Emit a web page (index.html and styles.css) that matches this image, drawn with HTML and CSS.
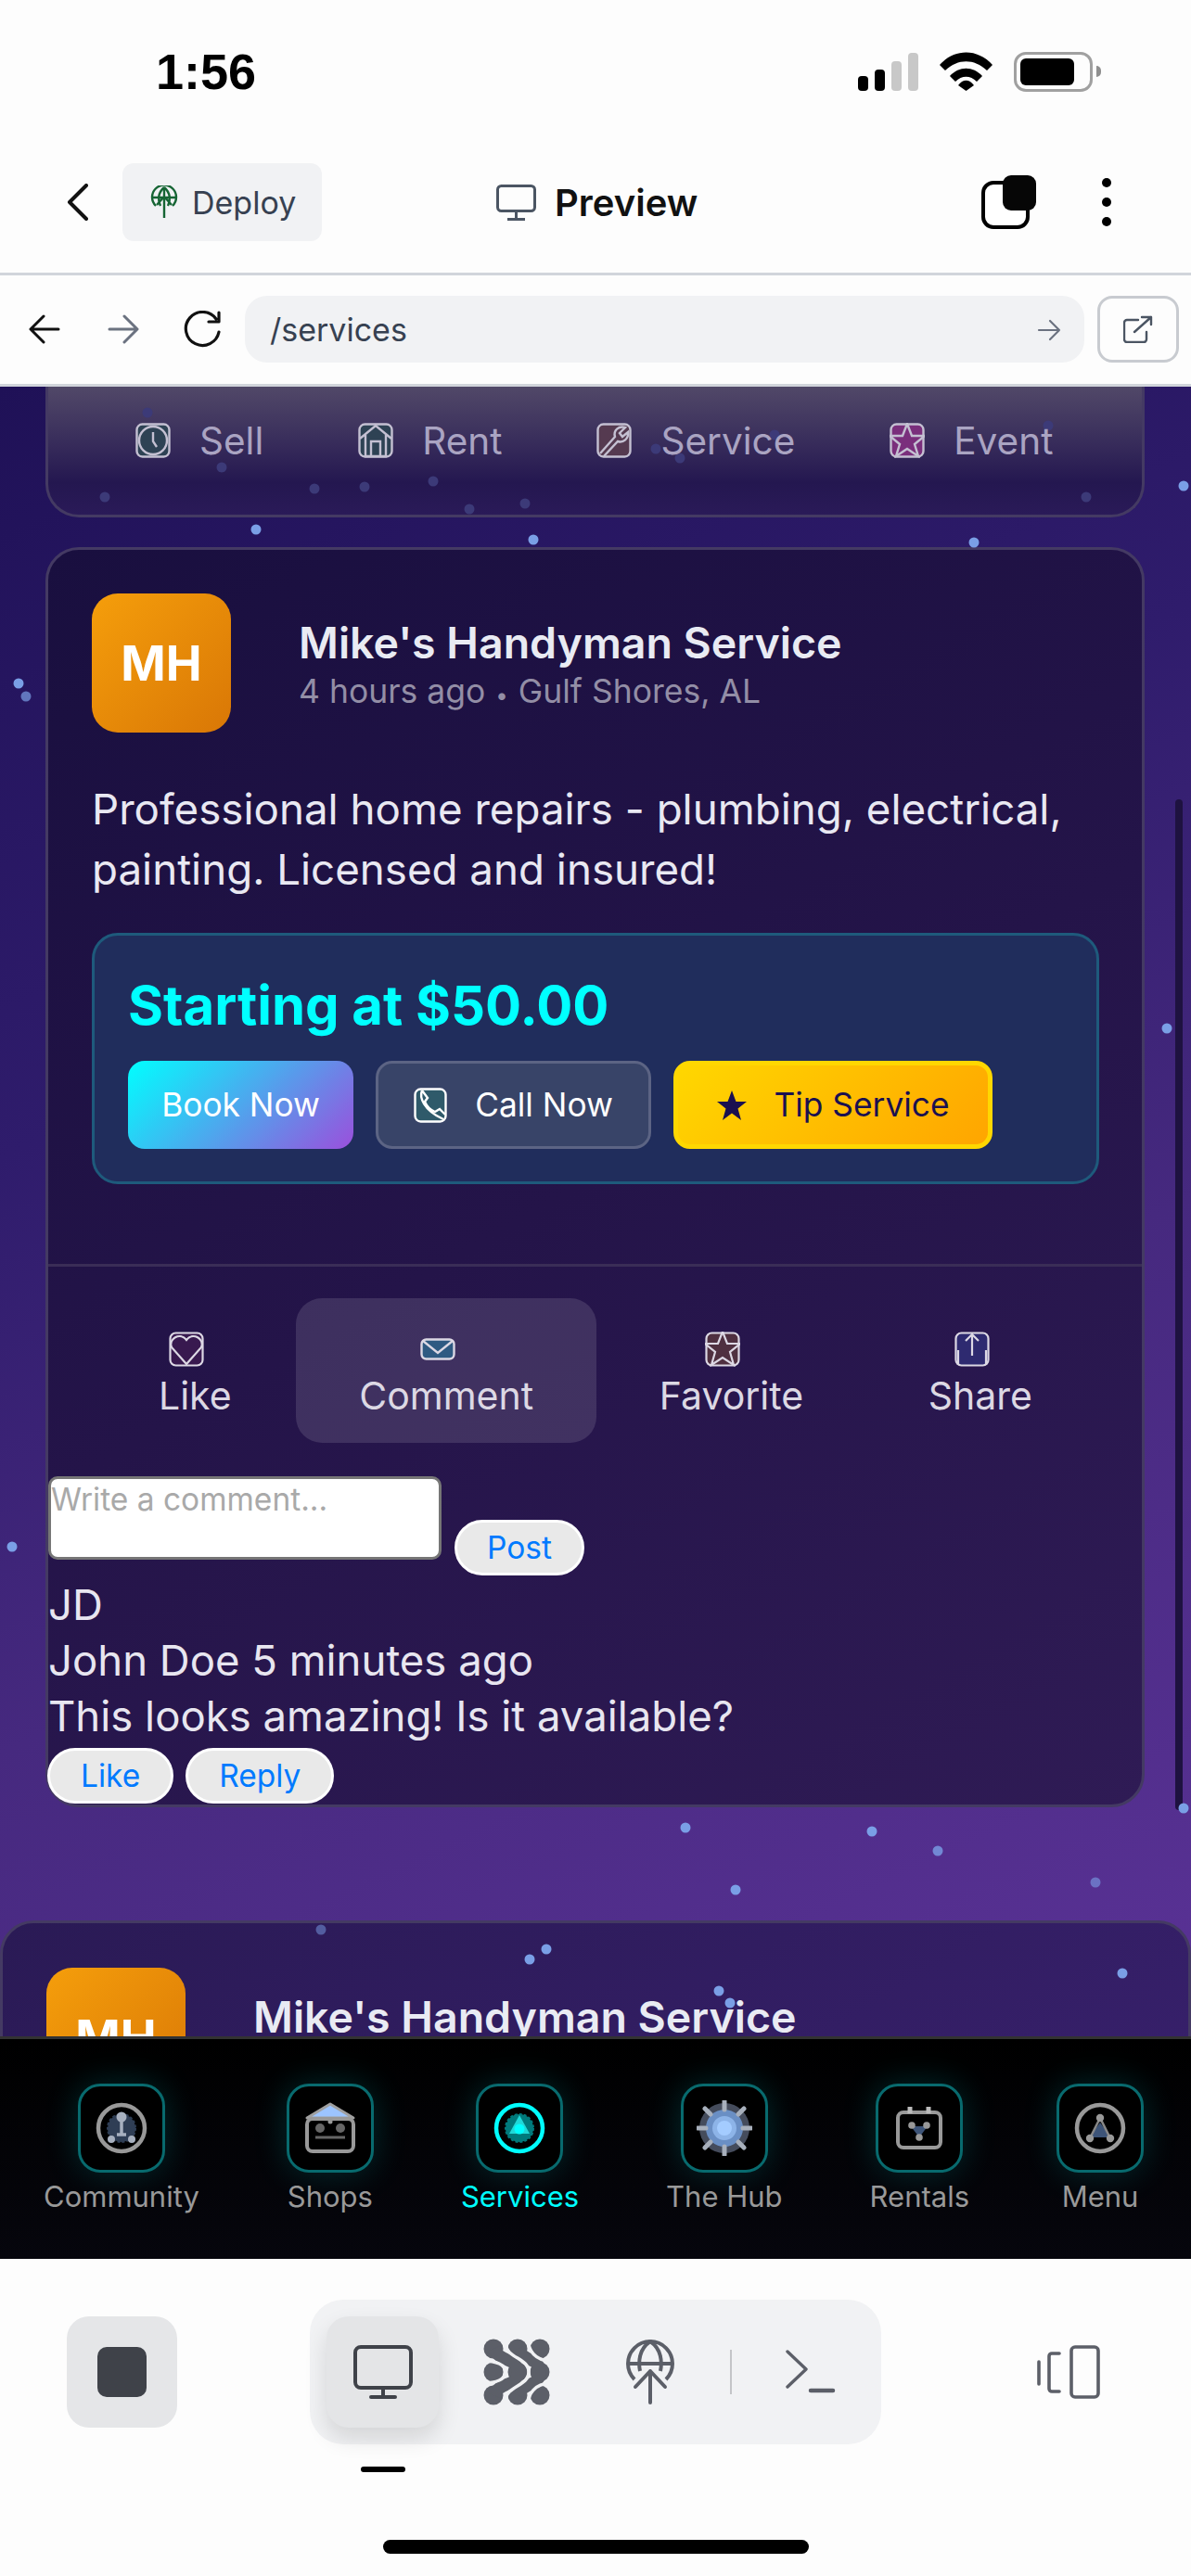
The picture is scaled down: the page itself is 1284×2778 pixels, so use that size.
FILE: index.html
```html
<!DOCTYPE html>
<html lang="en">

<head>
    <meta charset="UTF-8">
    <meta name="viewport" content="width=device-width, initial-scale=1.0">
    <title>Services Preview</title>
    <link rel="stylesheet" href="styles.css">
</head>

<body>

    <div class="status">
        <span class="time">1:56</span>
        <div class="status-icons">
            <svg width="66" height="41" viewBox="0 0 66 41">
                <rect x="0" y="25" width="11" height="16" rx="4" fill="#000" />
                <rect x="18" y="18" width="11" height="23" rx="4" fill="#000" />
                <rect x="36" y="9" width="11" height="32" rx="4" fill="#c8c8c8" />
                <rect x="54" y="0" width="11" height="41" rx="4" fill="#c8c8c8" />
            </svg>
            <svg class="wifi" width="57" height="42" viewBox="0 0 57 42">
                <path d="M0 14C16 -4 41 -4 57 14L51 20C37 7 20 7 6 20Z" fill="#000" />
                <path d="M11 26C21 15 36 15 46 26L40 32C33 25 24 25 17 32Z" fill="#000" />
                <path d="M20 36C25 29 32 29 37 36L28.5 42Z" fill="#000" />
            </svg>
            <div class="battery"><div class="battery-fill"></div></div>
            <div class="battery-nub"></div>
        </div>
    </div>

    <div class="topbar">
        <svg class="back" width="23" height="40" viewBox="0 0 23 40">
            <path d="M21 2L3 20L21 38" fill="none" stroke="#111" stroke-width="4" stroke-linecap="round" stroke-linejoin="round" />
        </svg>
        <div class="deploy">
            <svg width="30" height="36" viewBox="0 0 30 36" fill="none" stroke="#166534" stroke-width="2.4">
                <path d="M6 22A13 13 0 1 1 24 22" />
                <path d="M15 2C8 8 8 16 11 22M15 2C22 8 22 16 19 22M2 13H28M15 2V35M7 21L15 12L23 21" />
            </svg>
            <span>Deploy</span>
        </div>
        <div class="preview">
            <svg width="43" height="39" viewBox="0 0 43 39" fill="none" stroke="#4b5563" stroke-width="3">
                <rect x="1.5" y="1.5" width="40" height="27" rx="4" />
                <path d="M21.5 29V37M12 37.5H31" />
            </svg>
            <span>Preview</span>
        </div>
        <svg class="tabs-icon" width="59" height="58" viewBox="0 0 59 58">
            <rect x="2" y="8" width="48" height="48" rx="11" fill="#fff" stroke="#000" stroke-width="4" />
            <rect x="23" y="0" width="36" height="38" rx="9" fill="#060606" />
        </svg>
        <svg class="dots" width="12" height="54" viewBox="0 0 12 54">
            <circle cx="6" cy="6" r="5" fill="#000" />
            <circle cx="6" cy="27" r="5" fill="#000" />
            <circle cx="6" cy="48" r="5" fill="#000" />
        </svg>
    </div>

    <div class="urlbar">
        <svg class="nav-arrow" width="34" height="32" viewBox="0 0 34 32" fill="none" stroke="#111" stroke-width="3" stroke-linecap="round" stroke-linejoin="round">
            <path d="M32 16H3M16 2L2 16L16 30" />
        </svg>
        <svg class="nav-arrow forward" width="34" height="32" viewBox="0 0 34 32" fill="none" stroke="#6b7280" stroke-width="3" stroke-linecap="round" stroke-linejoin="round">
            <path d="M2 16H31M18 2L32 16L18 30" />
        </svg>
        <svg class="reload" width="46" height="40" viewBox="0 0 46 40" fill="none" stroke="#111" stroke-width="3.2" stroke-linecap="round" stroke-linejoin="round">
            <path d="M38 9A18 18 0 1 0 41 23M41 2V12H30" />
        </svg>
        <div class="address">
            <span>/services</span>
            <svg width="26" height="24" viewBox="0 0 26 24" fill="none" stroke="#6b7280" stroke-width="2.2" stroke-linecap="round" stroke-linejoin="round">
                <path d="M2 12H24M14 2L24 12L14 22" />
            </svg>
        </div>
        <div class="external">
            <svg width="32" height="30" viewBox="0 0 32 30" fill="none" stroke="#4b5563" stroke-width="2.4" stroke-linecap="round" stroke-linejoin="round">
                <path d="M16 5H4A3 3 0 0 0 1 8V26A3 3 0 0 0 4 29H22A3 3 0 0 0 25 26V18M12 18L30 2M20 2H30V10" />
            </svg>
        </div>
    </div>

    <div class="content">
        <svg class="particles dim" width="1284" height="1779" viewBox="0 417 1284 1779">
            <circle cx="159" cy="445" r="5.5" /><circle cx="239" cy="504" r="5.5" />
            <circle cx="339" cy="527" r="5.5" /><circle cx="393" cy="525" r="5.5" />
            <circle cx="467" cy="519" r="5.5" /><circle cx="113" cy="536" r="5.5" />
            <circle cx="566" cy="543" r="5.5" /><circle cx="506" cy="549" r="5.5" />
            <circle cx="707" cy="484" r="5.5" /><circle cx="733" cy="494" r="5.5" />
            <circle cx="835" cy="469" r="5.5" /><circle cx="1130" cy="459" r="5.5" />
            <circle cx="1171" cy="536" r="5.5" />
        </svg>

        <div class="card card-top">
            <div class="post-type">
                <svg width="38" height="38" viewBox="0 0 38 38" fill="none" stroke="#c4c0d2" stroke-width="2.4">
                    <rect x="1.5" y="1.5" width="35" height="35" rx="6" fill="#2e4254" />
                    <circle cx="19" cy="19" r="15" />
                    <path d="M19 10V20L23 26" />
                </svg>
                <span>Sell</span>
            </div>
            <div class="post-type">
                <svg width="38" height="38" viewBox="0 0 38 38" fill="none" stroke="#c4c0d2" stroke-width="2.4">
                    <rect x="1.5" y="1.5" width="35" height="35" rx="6" fill="#2e4254" />
                    <path d="M2 17L19 3L36 17M8 13V36H30V13M14 36V20H24V36" />
                </svg>
                <span>Rent</span>
            </div>
            <div class="post-type">
                <svg width="38" height="38" viewBox="0 0 38 38" fill="none" stroke="#c4c0d2" stroke-width="2.4">
                    <rect x="1.5" y="1.5" width="35" height="35" rx="6" fill="#553a50" />
                    <path d="M4 33L20 15C18 8 24 3 31 5L25 11L28 15L34 10C35 17 29 22 23 20L8 36" />
                </svg>
                <span>Service</span>
            </div>
            <div class="post-type">
                <svg width="38" height="38" viewBox="0 0 38 38" fill="none" stroke="#c4c0d2" stroke-width="2.4">
                    <rect x="1.5" y="1.5" width="35" height="35" rx="6" fill="#7a2f7c" />
                    <path d="M19 1L24 14L38 14L27 23L31 36L19 28L7 36L11 23L0 14L14 14Z" fill="#7a2f7c" />
                </svg>
                <span>Event</span>
            </div>
        </div>

        <div class="card card-post">
            <div class="post-header">
                <div class="avatar">MH</div>
                <div class="post-info">
                    <div class="post-title">Mike's Handyman Service</div>
                    <div class="post-meta">4 hours ago <span class="meta-dot">•</span> Gulf Shores, AL</div>
                </div>
            </div>
            <p class="post-text">Professional home repairs - plumbing, electrical, painting. Licensed and insured!</p>
            <div class="price-box">
                <div class="price">Starting at $50.00</div>
                <div class="price-buttons">
                    <button class="btn-book">Book Now</button>
                    <button class="btn-call">
                        <svg width="36" height="38" viewBox="0 0 36 38" fill="none" stroke="#fff" stroke-width="2.4">
                            <rect x="1.5" y="1.5" width="33" height="35" rx="6" fill="#2f5a6a" />
                            <path d="M9 3C6 10 10 24 32 34M9 3L15 11L12 15C14 20 18 24 23 26L28 23L34 29" />
                        </svg>
                        Call Now
                    </button>
                    <button class="btn-tip">
                        <svg width="34" height="34" viewBox="0 0 34 34">
                            <path d="M17 1L21.5 13H33L23.5 20.5L27 33L17 25.5L7 33L10.5 20.5L1 13H12.5Z" fill="#1a1050" />
                        </svg>
                        Tip Service
                    </button>
                </div>
            </div>
            <div class="post-actions">
                <div class="action">
                    <svg width="38" height="38" viewBox="0 0 38 38" fill="none" stroke="#dcd8e4" stroke-width="2.2">
                        <rect x="1.5" y="1.5" width="35" height="35" rx="6" fill="#38194f" />
                        <path d="M19 35L3 17C-1 8 12 0 19 9C26 0 39 8 35 17Z" fill="#38194f" />
                    </svg>
                    <span>Like</span>
                </div>
                <div class="action active">
                    <svg class="mail" width="38" height="24" viewBox="0 0 38 24" fill="none" stroke="#dcd8e4" stroke-width="2.4">
                        <rect x="1.5" y="1.5" width="35" height="21" rx="5" fill="#2f5a82" />
                        <path d="M3 3L19 16L35 3" />
                    </svg>
                    <span>Comment</span>
                </div>
                <div class="action">
                    <svg width="38" height="38" viewBox="0 0 38 38" fill="none" stroke="#dcd8e4" stroke-width="2.2">
                        <rect x="1.5" y="1.5" width="35" height="35" rx="6" fill="#4f3040" />
                        <path d="M19 0L24 13L38 13L27 22L31 36L19 28L7 36L11 22L0 13L14 13Z" fill="#4f3040" />
                    </svg>
                    <span>Favorite</span>
                </div>
                <div class="action">
                    <svg width="38" height="38" viewBox="0 0 38 38" fill="none" stroke="#dcd8e4" stroke-width="2.2">
                        <rect x="1.5" y="1.5" width="35" height="35" rx="6" fill="#2e2a70" />
                        <path d="M19 26V4M12 10L19 3L26 10M4 20V36M34 20V36" />
                    </svg>
                    <span>Share</span>
                </div>
            </div>
            <div class="comment-form">
                <textarea placeholder="Write a comment..."></textarea>
                <button class="plain-btn post-btn">Post</button>
            </div>
            <div class="comment">
                <div>JD</div>
                <div>John Doe 5 minutes ago</div>
                <div>This looks amazing! Is it available?</div>
            </div>
            <div class="comment-buttons">
                <button class="plain-btn">Like</button>
                <button class="plain-btn">Reply</button>
            </div>
        </div>

        <div class="card card-next">
            <div class="post-header">
                <div class="avatar">MH</div>
                <div class="post-info">
                    <div class="post-title">Mike's Handyman Service</div>
                    <div class="post-meta">4 hours ago <span class="meta-dot">•</span> Gulf Shores, AL</div>
                </div>
            </div>
        </div>

        <svg class="particles bright" width="1284" height="1779" viewBox="0 417 1284 1779">
            <circle cx="1276" cy="524" r="5.5" /><circle cx="276" cy="571" r="5.5" />
            <circle cx="575" cy="582" r="5.5" /><circle cx="1050" cy="585" r="5.5" />
            <circle cx="20" cy="737" r="5.5" /><circle cx="28" cy="751" r="5.5" opacity="0.7" />
            <circle cx="1258" cy="1109" r="5.5" /><circle cx="13" cy="1668" r="5.5" />
            <circle cx="1276" cy="1950" r="5.5" /><circle cx="739" cy="1971" r="5.5" />
            <circle cx="940" cy="1975" r="5.5" /><circle cx="1011" cy="1996" r="5.5" opacity="0.8" />
            <circle cx="793" cy="2038" r="5.5" /><circle cx="1181" cy="2030" r="5.5" opacity="0.6" />
            <circle cx="346" cy="2081" r="5.5" opacity="0.5" /><circle cx="589" cy="2102" r="5.5" />
            <circle cx="571" cy="2113" r="5.5" /><circle cx="1210" cy="2128" r="5.5" />
            <circle cx="775" cy="2147" r="5.5" /><circle cx="787" cy="2160" r="5.5" />
        </svg>

        <div class="scrollbar"></div>
    </div>

    <div class="bottom-nav">
        <div class="nav-item">
            <div class="nav-box">
                <svg width="60" height="60" viewBox="-30 -30 60 60">
                    <circle r="15" fill="#2f3e55" stroke="#2f3e55" stroke-width="2" stroke-dasharray="3 2" />
                    <circle r="25" fill="none" stroke="#999" stroke-width="4.5" />
                    <circle cy="-12" r="5.5" fill="#a7b0bf" />
                    <path d="M0 -8V7M-5 7H5" stroke="#a7b0bf" stroke-width="3.5" fill="none" />
                    <circle cx="-11" cy="12" r="4" fill="#a7b0bf" />
                    <circle cx="11" cy="12" r="4" fill="#a7b0bf" />
                </svg>
            </div>
            <span>Community</span>
        </div>
        <div class="nav-item">
            <div class="nav-box">
                <svg width="60" height="60" viewBox="-30 -30 60 60">
                    <path d="M-25 -11L0 -26L25 -11Z" fill="#9cc4ff" stroke="#a0a0a0" stroke-width="3" stroke-linejoin="round" />
                    <rect x="-25" y="-10" width="50" height="35" rx="6" fill="#000" stroke="#999" stroke-width="4" />
                    <circle cx="-11" cy="0" r="5" fill="#666" />
                    <circle cx="11" cy="0" r="5" fill="#666" />
                    <circle cy="-7" r="2.5" fill="#999" />
                    <path d="M-16 10H16" stroke="#666" stroke-width="3" />
                </svg>
            </div>
            <span>Shops</span>
        </div>
        <div class="nav-item active">
            <div class="nav-box">
                <svg width="60" height="60" viewBox="-30 -30 60 60">
                    <circle r="15" fill="#007a7c" stroke="#007a7c" stroke-width="2" stroke-dasharray="3 2" />
                    <circle r="25" fill="none" stroke="#00ffff" stroke-width="4.5" />
                    <path d="M0 -14L11 6H-11Z" fill="#20d8d8" />
                    <circle cy="1" r="5.5" fill="#00ffff" />
                </svg>
            </div>
            <span>Services</span>
        </div>
        <div class="nav-item">
            <div class="nav-box">
                <svg width="60" height="60" viewBox="-30 -30 60 60">
                    <circle r="27" fill="#454c5c" />
                    <circle r="20" fill="#6a8fc4" />
                    <circle r="13" fill="#8db4e8" />
                    <circle r="8" fill="#a4ccff" />
                    <path d="M0 -29V-20M0 20V29M-29 0H-20M20 0H29M-21 -21L-15 -15M21 -21L15 -15M-21 21L-15 15M21 21L15 15" stroke="#a8b0bc" stroke-width="5" stroke-linecap="round" />
                </svg>
            </div>
            <span>The Hub</span>
        </div>
        <div class="nav-item">
            <div class="nav-box">
                <svg width="60" height="60" viewBox="-30 -30 60 60">
                    <rect x="-23" y="-17" width="46" height="38" rx="6" fill="none" stroke="#999" stroke-width="4" />
                    <path d="M-10 -23V-16M10 -23V-16" stroke="#bbb" stroke-width="5" />
                    <path d="M-9 -2L9 -2L0 10Z" fill="#3d5478" />
                    <circle cx="-8" cy="-3" r="3.8" fill="#999" />
                    <circle cx="8" cy="-3" r="3.8" fill="#999" />
                    <circle cx="0" cy="10" r="3.8" fill="#999" />
                </svg>
            </div>
            <span>Rentals</span>
        </div>
        <div class="nav-item">
            <div class="nav-box">
                <svg width="60" height="60" viewBox="-30 -30 60 60">
                    <circle r="25" fill="none" stroke="#999" stroke-width="4.5" />
                    <path d="M0 -6L12 10H-12Z" fill="#3d5478" />
                    <path d="M0 -11L-11 11M0 -11L11 11" stroke="#888" stroke-width="2.5" />
                    <circle cy="-11" r="4.2" fill="#999" />
                    <circle cx="-11" cy="11" r="4.2" fill="#999" />
                    <circle cx="11" cy="11" r="4.2" fill="#999" />
                </svg>
            </div>
            <span>Menu</span>
        </div>
    </div>

    <div class="footer">
        <div class="footer-row">
            <div class="stop-btn"><div class="stop-square"></div></div>
            <div class="view-switch">
                <div class="view-btn active">
                    <svg width="64" height="58" viewBox="0 0 64 58" fill="none" stroke="#3f4249" stroke-width="4">
                        <rect x="2" y="2" width="60" height="44" rx="6" />
                        <path d="M32 46V56M19 56H45" stroke-linecap="round" />
                    </svg>
                    <div class="view-mark"></div>
                </div>
                <svg class="cluster" width="72" height="72" viewBox="0 0 72 72" fill="#5c5f68">
                    <circle cx="11" cy="11" r="10.5" /><circle cx="37" cy="11" r="10.5" /><circle cx="61" cy="11" r="10.5" />
                    <circle cx="11" cy="36" r="10.5" /><circle cx="37" cy="36" r="10.5" /><circle cx="61" cy="36" r="10.5" />
                    <circle cx="11" cy="61" r="10.5" /><circle cx="37" cy="61" r="10.5" /><circle cx="61" cy="61" r="10.5" />
                    <path d="M11 11C18 26 37 20 37 36C37 52 18 46 11 61" fill="none" stroke="#5c5f68" stroke-width="13" />
                    <path d="M37 11C44 26 61 20 61 36C61 52 44 46 37 61" fill="none" stroke="#5c5f68" stroke-width="13" />
                    <g fill="none" stroke="#f1f2f4" stroke-width="3.5">
                        <path d="M24 -2V4C24 22 49 20 49 36C49 52 24 50 24 68V74" />
                        <path d="M-1 24C14 24 24 28 24 36C24 44 14 48 -1 48" />
                        <path d="M49 -1C47 12 56 24 73 24" />
                        <path d="M49 73C47 60 56 48 73 48" />
                    </g>
                </svg>
                <svg class="globe" width="52" height="70" viewBox="0 0 52 70" fill="none" stroke="#5c5f68" stroke-width="4">
                    <path d="M9 43A24 24 0 1 1 43 43" />
                    <path d="M26 2C14 10 13 24 15 34M26 2C38 10 39 24 37 34M2 26H50" />
                    <path d="M26 68V34M10 51L26 34L42 51" stroke-linecap="round" stroke-linejoin="round" />
                </svg>
                <div class="view-sep"></div>
                <svg class="terminal" width="54" height="48" viewBox="0 0 54 48" fill="none" stroke="#5c5f68" stroke-linecap="round" stroke-linejoin="round">
                    <path d="M2 2L22 21L2 40" stroke-width="3.4" />
                    <path d="M27 44H51" stroke-width="4.5" />
                </svg>
            </div>
            <svg class="devices" width="68" height="58" viewBox="0 0 68 58" fill="none" stroke="#5c5f68" stroke-width="3.6" stroke-linecap="round">
                <path d="M2 18V42" />
                <path d="M24 9H16A3 3 0 0 0 13 12V47A3 3 0 0 0 16 50H24" />
                <rect x="37" y="2" width="29" height="54" rx="4" />
            </svg>
        </div>
        <div class="home-indicator"></div>
    </div>

</body>

</html>
```

FILE: styles.css
```css
* {
    box-sizing: border-box;
}

body {
    margin: 0;
    width: 1284px;
    height: 2778px;
    overflow: hidden;
    font-family: Inter, "Liberation Sans", sans-serif;
    background-color: #fdfdfd;
    display: flex;
    flex-direction: column;
}

svg {
    display: block;
    flex-shrink: 0;
}

/* phone status bar */
.status {
    height: 154px;
    display: flex;
    align-items: center;
    padding: 0 97px 0 168px;
    justify-content: space-between;
}

.time {
    font-family: "Liberation Sans", sans-serif;
    font-weight: 700;
    font-size: 54px;
    color: #000;
}

.status-icons {
    display: flex;
    align-items: center;
}

.wifi {
    margin-left: 22px;
}

.battery {
    margin-left: 23px;
    width: 85px;
    height: 43px;
    border: 3px solid #a0a0a0;
    border-radius: 13px;
    padding: 4px 17px 4px 4px;
}

.battery-fill {
    height: 100%;
    background-color: #000;
    border-radius: 6px;
}

.battery-nub {
    margin-left: 4px;
    width: 5px;
    height: 12px;
    background-color: #8f8f8f;
    border-radius: 0 6px 6px 0;
}

/* preview header */
.topbar {
    display: flex;
    align-items: center;
    padding: 22px 85px 34px 72px;
    border-bottom: 3px solid #d1d5db;
    height: 143px;
}

.deploy {
    margin-left: 37px;
    width: 215px;
    height: 84px;
    background-color: #f1f2f4;
    border-radius: 12px;
    display: flex;
    align-items: center;
    padding-left: 30px;
    gap: 15px;
    font-size: 34px;
    color: #374151;
}

.preview {
    margin-left: 188px;
    display: flex;
    align-items: center;
    gap: 20px;
    font-size: 40px;
    font-weight: 600;
    color: #111;
}

.tabs-icon {
    margin-left: auto;
}

.dots {
    margin-left: 70px;
}

/* url bar */
.urlbar {
    height: 120px;
    display: flex;
    align-items: center;
    padding: 0 13px 2px 31px;
    border-bottom: 3px solid #d1d5db;
}

.forward {
    margin-left: 51px;
}

.reload {
    margin-left: 45px;
}

.address {
    margin-left: 23px;
    width: 905px;
    height: 72px;
    background-color: #f1f2f4;
    border-radius: 24px;
    display: flex;
    align-items: center;
    justify-content: space-between;
    padding: 2px 25px 0 27px;
    font-size: 34px;
    color: #374151;
}

.external {
    margin-left: 14px;
    width: 88px;
    height: 72px;
    border: 3px solid #c8cbd0;
    border-radius: 16px;
    display: flex;
    align-items: center;
    justify-content: center;
}

/* scrolled page */
.content {
    position: relative;
    height: 1779px;
    overflow: hidden;
    background: linear-gradient(155deg, #1f1157 0%, #2f1c6c 35%, #46297f 62%, #5a3296 100%);
}

.particles {
    position: absolute;
    left: 0;
    top: 0;
}

.particles.dim {
    z-index: 2;
    fill: #3c3a78;
}

.particles.bright {
    z-index: 3;
    fill: #7a9fe6;
}

.card {
    position: relative;
    border: 3px solid #443a63;
    border-radius: 36px;
    color: #e8e6f0;
}

.card-top {
    margin: 0 50px 0 49px;
    height: 141px;
    border-top: none;
    border-radius: 0 0 36px 36px;
    background: linear-gradient(180deg, #514868 0%, #3a2f5c 40%, #241750 75%, #2a1a58 100%);
    display: flex;
    padding: 39px 0 0 94px;
}

.post-type {
    display: flex;
    align-items: center;
    height: 38px;
    gap: 31px;
    font-size: 40.5px;
    color: #aaa4c2;
    margin-right: 102px;
    z-index: 3;
}

.card-post {
    margin: 32px 50px 0 49px;
    height: 1359px;
    background: linear-gradient(150deg, #190f3f 0%, #241449 50%, #2f1b55 100%);
    padding-top: 47px;
}

.post-header {
    display: flex;
    align-items: center;
    gap: 73px;
    padding-left: 47px;
}

.avatar {
    width: 150px;
    height: 150px;
    border-radius: 28px;
    background: linear-gradient(135deg, #f59e0b, #d97706);
    color: #fff;
    font-size: 52px;
    font-weight: 700;
    display: flex;
    align-items: center;
    justify-content: center;
    flex-shrink: 0;
}

.post-info {
    padding-top: 5px;
}

.post-title {
    font-size: 46.5px;
    font-weight: 600;
    line-height: 54px;
    color: #e9ebf3;
    margin-bottom: 6px;
}

.post-meta {
    font-size: 35.5px;
    line-height: 40px;
    color: #938ea6;
}

.meta-dot {
    font-size: 24px;
    margin: 0 1px;
}

.post-text {
    margin: 50px 47px 36px;
    font-size: 45.7px;
    line-height: 65px;
    color: #e9e8f2;
}

.price-box {
    margin: 0 46px 86px 47px;
    height: 271px;
    border: 3px solid #1e5a7c;
    border-radius: 28px;
    background-color: #202d5c;
    padding: 35px 36px;
}

.price {
    font-size: 58px;
    font-weight: 700;
    line-height: 80px;
    color: #00ffff;
    margin-bottom: 20px;
}

.price-buttons {
    display: flex;
    gap: 24px;
}

.price-buttons button {
    height: 95px;
    border-radius: 18px;
    font-family: inherit;
    font-size: 35.3px;
    display: flex;
    align-items: center;
    justify-content: center;
    border: none;
    padding: 0;
}

.btn-book {
    width: 243px;
    color: #fff;
    background: linear-gradient(135deg, #00ffff, #9b4fdc);
}

.price-buttons .btn-call {
    width: 297px;
    color: #fff;
    background-color: #384468;
    border: 3px solid #5c6484;
    gap: 30px;
}

.price-buttons .btn-tip {
    width: 344px;
    color: #1a1050;
    background: linear-gradient(135deg, #ffd700, #ffa500);
    border: 5px solid #ffd700;
    gap: 28px;
}

.post-actions {
    border-top: 3px solid #3a2d57;
    padding: 34px 51px 0 52px;
    display: flex;
    justify-content: space-between;
}

.action {
    height: 156px;
    padding: 36px 67px 0;
    border-radius: 28px;
    display: flex;
    flex-direction: column;
    align-items: center;
    font-size: 41px;
    line-height: 62px;
    color: #dcd8e4;
}

.action svg {
    margin-right: 18px;
}

.action .mail {
    margin-top: 7px;
    margin-bottom: 7px;
}

.action.active {
    margin-left: 2px;
    padding: 36px 68px 0;
    background-color: rgba(255, 255, 255, 0.12);
}

.comment-form {
    display: flex;
    align-items: flex-start;
    gap: 14px;
    margin-top: 36px;
}

textarea {
    width: 424px;
    height: 90px;
    border: 3px solid #767676;
    border-radius: 10px;
    padding: 2px 0 0;
    font-family: inherit;
    font-size: 33.5px;
    line-height: 40px;
    resize: none;
    background-color: #fff;
}

textarea::placeholder {
    color: #a9a9a9;
}

.plain-btn {
    height: 60px;
    padding: 0 33px;
    border: 3px solid #fff;
    border-radius: 30px;
    background-color: #e9e9e9;
    color: #007aff;
    font-family: inherit;
    font-size: 33.5px;
}

.post-btn {
    margin-top: 47px;
    padding: 0 32px;
}

.comment {
    margin-top: 2px;
    font-size: 45.5px;
    line-height: 60px;
    color: #e8e6f0;
}

.comment-buttons {
    display: flex;
    gap: 13px;
    margin: 4px 0 0 -1px;
}

.card-next {
    margin: 122px 0 0;
    height: 400px;
    background: linear-gradient(150deg, #2a1a55, #3a2170);
    padding-top: 48px;
}

.scrollbar {
    position: absolute;
    right: 9px;
    top: 445px;
    width: 8px;
    height: 1090px;
    border-radius: 4px;
    background-color: #1e1240;
    z-index: 2;
}

/* app bottom navigation */
.bottom-nav {
    height: 240px;
    border-top: 3px solid #333;
    background: linear-gradient(180deg, #000, #06060d);
    display: flex;
    gap: 94px;
    padding: 48px 0 0 47px;
    z-index: 4;
}

.nav-item {
    display: flex;
    flex-direction: column;
    align-items: center;
    font-size: 31px;
    line-height: 40px;
    color: #999;
}

.nav-item.active {
    color: #00ffff;
}

.nav-box {
    width: 94px;
    height: 96px;
    border: 3px solid #086a6e;
    border-radius: 24px;
    background-color: #000;
    box-shadow: 0 0 36px rgba(0, 255, 255, 0.17);
    display: flex;
    align-items: center;
    justify-content: center;
    margin-bottom: 6px;
}

/* editor footer */
.footer {
    flex: 1;
    position: relative;
}

.footer-row {
    display: flex;
    align-items: center;
    padding: 44px 98px 0 72px;
}

.stop-btn {
    width: 119px;
    height: 120px;
    background-color: #e5e6e8;
    border-radius: 24px;
    display: flex;
    align-items: center;
    justify-content: center;
}

.stop-square {
    width: 53px;
    height: 54px;
    background-color: #3f4249;
    border-radius: 10px;
}

.view-switch {
    margin-left: 143px;
    width: 616px;
    height: 156px;
    background-color: #f1f2f4;
    border-radius: 36px;
    display: flex;
    align-items: center;
    padding-left: 18px;
}

.view-btn {
    position: relative;
    width: 121px;
    height: 120px;
    border-radius: 24px;
    background-color: #e4e5e7;
    box-shadow: 0 12px 24px rgba(0, 0, 0, 0.12);
    display: flex;
    align-items: center;
    justify-content: center;
}

.view-mark {
    position: absolute;
    left: 37px;
    top: 162px;
    width: 48px;
    height: 6px;
    border-radius: 3px;
    background-color: #000;
}

.cluster {
    margin-left: 48px;
}

.globe {
    margin-left: 82px;
}

.view-sep {
    margin-left: 60px;
    width: 2px;
    height: 48px;
    background-color: #c4c5c8;
}

.terminal {
    margin-left: 58px;
}

.devices {
    margin-left: auto;
}

.home-indicator {
    position: absolute;
    left: 413px;
    top: 303px;
    width: 459px;
    height: 15px;
    border-radius: 8px;
    background-color: #000;
}
```
